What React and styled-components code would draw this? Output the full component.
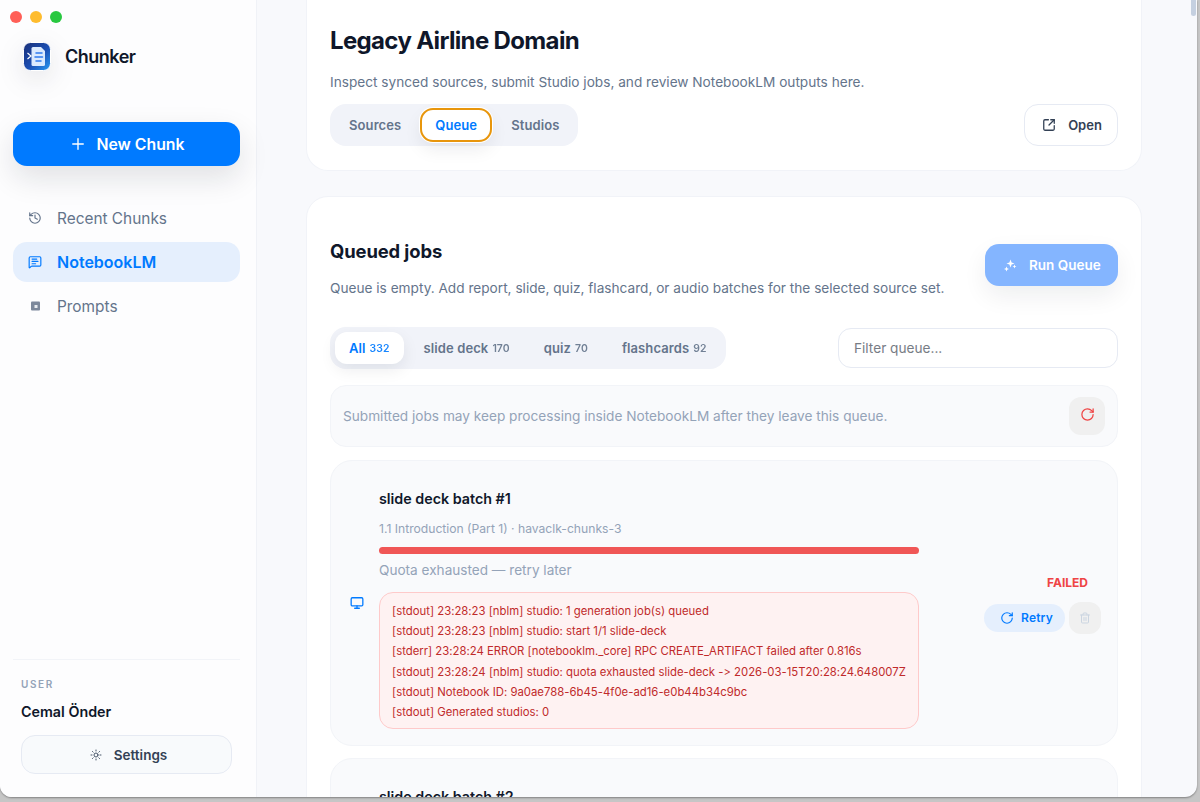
import styled, { createGlobalStyle } from "styled-components";
import {
  History,
  MessageSquareText,
  Plus,
  SquareArrowOutUpRight,
  Sun,
  Monitor,
  RotateCw,
  Trash2,
} from "lucide-react";

const GlobalStyle = createGlobalStyle`
  html, body {
    margin: 0;
    height: 100%;
    background: #c6c6c6;
    font-family: Inter, "Liberation Sans", sans-serif;
    overflow: hidden;
  }
  * { box-sizing: border-box; }
`;

const Desktop = styled.div`
  width: 1200px;
  height: 802px;
  overflow: hidden;
  background: #c6c6c6;
`;

const Window = styled.div`
  position: relative;
  width: 1197px;
  height: 797px;
  display: flex;
  overflow: hidden;
  border-radius: 0 0 12px 12px;
  background: #f8f9fc;
  box-shadow: 0 1px 2px rgba(0, 0, 0, 0.35);
`;

const ScrollThumb = styled.div`
  position: absolute;
  top: -4px;
  right: 1px;
  width: 5px;
  height: 20px;
  border-radius: 3px;
  background: #c5d0e0;
`;

const Sidebar = styled.aside`
  width: 257px;
  flex: none;
  display: flex;
  flex-direction: column;
  padding: 11px 16px 23px 13px;
  background: #fdfdfe;
  border-right: 1px solid #f0f2f7;
`;

const Traffic = styled.div`
  display: flex;
  gap: 8px;
  margin-left: -3px;
`;

const Light = styled.span`
  width: 12px;
  height: 12px;
  border-radius: 50%;
  background: ${(p) => p.$color};
`;

const Brand = styled.div`
  display: flex;
  align-items: center;
  gap: 14px;
  margin: 18px 0 0 10px;
  height: 30px;
  font-size: 18px;
  font-weight: 600;
  letter-spacing: -0.5px;
  color: #0f172a;
`;

const LogoMark = styled.svg`
  flex: none;
  filter: drop-shadow(0 8px 12px rgba(15, 23, 42, 0.1));
`;

const NewChunk = styled.div`
  height: 44px;
  margin-top: 51px;
  display: flex;
  align-items: center;
  justify-content: center;
  gap: 10px;
  border-radius: 14px;
  background: #007aff;
  color: #fff;
  font-size: 15.8px;
  font-weight: 600;
  box-shadow: 0 12px 30px rgba(15, 23, 42, 0.12);
`;

const Nav = styled.nav`
  display: flex;
  flex-direction: column;
  gap: 4px;
  margin-top: 32px;
`;

const NavItem = styled.div`
  height: 40px;
  display: flex;
  align-items: center;
  gap: 15px;
  padding-left: 15px;
  border-radius: 14px;
  font-size: ${(p) => (p.$active ? "16px" : "15.4px")};
  font-weight: ${(p) => (p.$active ? 600 : 400)};
  color: ${(p) => (p.$active ? "#007aff" : "#64748b")};
  background: ${(p) => (p.$active ? "#e5effd" : "transparent")};
`;

const SidebarFoot = styled.div`
  margin-top: auto;
  border-top: 1px solid #f2f4f8;
  padding: 18px 8px 0;
`;

const UserLabel = styled.div`
  font-size: 10px;
  font-weight: 600;
  letter-spacing: 1.6px;
  color: #94a3b8;
  line-height: 13px;
`;

const UserName = styled.div`
  margin-top: 12px;
  font-size: 14.3px;
  font-weight: 600;
  line-height: 18px;
  color: #0f172a;
`;

const SettingsBtn = styled.div`
  height: 39px;
  margin-top: 14px;
  display: flex;
  align-items: center;
  justify-content: center;
  gap: 12px;
  padding-left: 4px;
  border-radius: 14px;
  border: 1px solid #e6eaf3;
  background: #f8fafc;
  font-size: 13.5px;
  font-weight: 600;
  color: #334155;
`;

const Main = styled.main`
  flex: 1;
  min-width: 0;
  display: flex;
  flex-direction: column;
  gap: 25px;
  padding: 0 55px 0 49px;
  overflow: hidden;
`;

const Card = styled.section`
  flex: none;
  background: #fff;
  border: 1px solid #f1f3f8;
  border-radius: 22px;
  padding: ${(p) => p.$pad};
  ${(p) => p.$top && "border-top: none; border-radius: 0 0 22px 22px;"}
`;

const Title = styled.h1`
  margin: 0;
  font-size: 24px;
  line-height: 30px;
  font-weight: 700;
  letter-spacing: -0.65px;
  color: #0f172a;
`;

const Subtitle = styled.p`
  margin: 17px 0 0;
  font-size: 13.65px;
  line-height: 18px;
  color: #64748b;
`;

const HeadRow = styled.div`
  display: flex;
  align-items: center;
  justify-content: space-between;
  margin-top: 13px;
`;

const Segments = styled.div`
  display: inline-flex;
  align-items: center;
  gap: 6px;
  height: 42px;
  padding: 0 5px;
  border-radius: 16px;
  background: #f1f3f9;
`;

const Segment = styled.div`
  height: 32px;
  display: flex;
  align-items: center;
  gap: 4px;
  padding: 0 14px;
  border-radius: 12px;
  font-size: 13px;
  font-weight: 600;
  letter-spacing: 0.1px;
  white-space: nowrap;
  color: ${(p) => (p.$active ? "#007aff" : "#64748b")};
  background: ${(p) => (p.$active ? "#fff" : "transparent")};
  ${(p) => p.$active && "box-shadow: 0 6px 16px rgba(15, 23, 42, 0.08);"}
  ${(p) => p.$focus && "outline: 2px solid #e8960c; outline-offset: -1px; box-shadow: 0 0 0 2px #fff, 0 8px 18px rgba(15, 23, 42, 0.08);"}
`;

const Count = styled.span`
  font-size: 10.4px;
  font-weight: 600;
  opacity: 0.9;
`;

const OpenBtn = styled.div`
  width: 94px;
  height: 42px;
  display: flex;
  align-items: center;
  justify-content: center;
  gap: 12px;
  padding-left: 2px;
  border-radius: 14px;
  border: 1px solid #e6eaf3;
  background: #fff;
  font-size: 13px;
  font-weight: 600;
  color: #334155;
`;

const QueueHead = styled.div`
  display: flex;
  align-items: flex-start;
  justify-content: space-between;
`;

const QueueTitle = styled.h2`
  margin: 0;
  font-size: 18.4px;
  line-height: 24px;
  font-weight: 700;
  letter-spacing: -0.1px;
  color: #0f172a;
`;

const QueueText = styled.p`
  margin: 16px 0 0;
  font-size: 13.65px;
  line-height: 18px;
  color: #64748b;
`;

const RunBtn = styled.div`
  width: 133px;
  height: 42px;
  margin-top: 5px;
  display: flex;
  align-items: center;
  gap: 12px;
  padding-left: 18px;
  border-radius: 14px;
  background: #84b5ff;
  color: #fff;
  font-size: 13.5px;
  font-weight: 600;
  box-shadow: 0 10px 24px rgba(15, 23, 42, 0.07);
`;

const FilterRow = styled.div`
  display: flex;
  align-items: center;
  justify-content: space-between;
  margin-top: 30px;
`;

const FilterInput = styled.div`
  width: 280px;
  height: 40px;
  display: flex;
  align-items: center;
  padding-left: 15px;
  border-radius: 13px;
  border: 1px solid #e6eaf3;
  background: #fff;
  font-size: 13.65px;
  color: #777c85;
`;

const Notice = styled.div`
  height: 62px;
  margin-top: 16px;
  display: flex;
  align-items: center;
  justify-content: space-between;
  padding: 0 12px;
  border-radius: 16px;
  border: 1px solid #f2f4f8;
  background: #f9fafc;
  font-size: 13.65px;
  color: #94a3b8;
`;

const IconBtn = styled.div`
  width: ${(p) => p.$w}px;
  height: ${(p) => p.$h}px;
  display: flex;
  align-items: center;
  justify-content: center;
  border-radius: 12px;
  background: #f0f0f0;
`;

const RefreshGlyph = styled(RotateCw)`
  margin-top: -4px;
`;

const JobList = styled.div`
  display: flex;
  flex-direction: column;
  gap: 12px;
  margin-top: 13px;
`;

const Job = styled.article`
  display: grid;
  grid-template-columns: 14px 540px 1fr;
  column-gap: 18px;
  align-items: center;
  padding: 17px 16px 16px;
  border-radius: 22px;
  border: 1px solid #f2f4f8;
  background: #f9fafc;
`;

const JobIcon = styled(Monitor)`
  margin: -2px 0 0 3px;
`;

const JobBody = styled.div`
  min-width: 0;
  padding-top: 11px;
`;

const JobTitle = styled.div`
  font-size: 14.3px;
  line-height: 20px;
  font-weight: 600;
  color: #0f172a;
`;

const JobMeta = styled.div`
  margin-top: 12px;
  font-size: 12.15px;
  line-height: 16px;
  color: #94a3b8;
`;

const Progress = styled.div`
  height: 7px;
  margin-top: 10px;
  border-radius: 3.5px;
  background: #f05656;
`;

const JobStatus = styled.div`
  margin-top: 7px;
  font-size: 13.6px;
  line-height: 18px;
  color: #94a3b8;
`;

const Log = styled.div`
  margin-top: 13px;
  padding: 8px 12px 6px;
  border-radius: 14px;
  border: 1px solid #fecaca;
  background: #fef2f2;
  font-size: 11.35px;
  font-feature-settings: "calt" 0;
  line-height: 20.2px;
  white-space: nowrap;
  color: #c02a2a;
`;

const JobSide = styled.div`
  display: flex;
  flex-direction: column;
  align-items: flex-end;
  gap: 11px;
  margin-top: 1px;
`;

const Failed = styled.div`
  margin-right: 13px;
  font-size: 12px;
  line-height: 16px;
  font-weight: 700;
  color: #ef4444;
`;

const SideActions = styled.div`
  display: flex;
  align-items: center;
  gap: 4px;
`;

const RetryBtn = styled.div`
  width: 81px;
  height: 28px;
  display: flex;
  align-items: center;
  gap: 7px;
  padding-left: 16px;
  border-radius: 14px;
  background: #e5effd;
  color: #007aff;
  font-size: 12px;
  font-weight: 600;
  letter-spacing: 0.2px;
`;

const logLines = [
  "[stdout] 23:28:23 [nblm] studio: 1 generation job(s) queued",
  "[stdout] 23:28:23 [nblm] studio: start 1/1 slide-deck",
  "[stderr] 23:28:24 ERROR [notebooklm._core] RPC CREATE_ARTIFACT failed after 0.816s",
  "[stdout] 23:28:24 [nblm] studio: quota exhausted slide-deck -> 2026-03-15T20:28:24.648007Z",
  "[stdout] Notebook ID: 9a0ae788-6b45-4f0e-ad16-e0b44b34c9bc",
  "[stdout] Generated studios: 0",
];

const filters = [
  { label: "All", count: 332, active: true },
  { label: "slide deck", count: 170 },
  { label: "quiz", count: 70 },
  { label: "flashcards", count: 92 },
];

const ChunkerLogo = () => (
  <LogoMark width="28" height="29" viewBox="0 0 28 29">
    <defs>
      <linearGradient id="logo" x1="0" y1="0" x2="1" y2="1">
        <stop offset="0" stopColor="#1a2f77" />
        <stop offset="0.55" stopColor="#1b4fb4" />
        <stop offset="1" stopColor="#2a9cf5" />
      </linearGradient>
    </defs>
    <rect x="0.5" y="0.5" width="27" height="28" rx="7" fill="url(#logo)" stroke="#fff" />
    <path d="M10 5h8l4 4v13.5a1.5 1.5 0 0 1-1.5 1.5H10a1.5 1.5 0 0 1-1.5-1.5V6.500A1.5 1.5 0 0 1 10 5z" fill="#dbeafe" />
    <path d="M13 11h6M12 15h7.5M13 19h5" stroke="#2f7bf0" strokeWidth="1.5" strokeLinecap="round" />
    <path d="M4.5 11l3.5 3-3.5 3" fill="none" stroke="#fff" strokeWidth="1.2" />
  </LogoMark>
);

const PromptsIcon = () => (
  <svg width="14" height="14" viewBox="0 0 14 14">
    <rect x="3" y="2.5" width="9" height="9" rx="1" fill="#7c889b" />
    <rect x="6.5" y="6" width="3" height="3" fill="#e8ebf0" />
  </svg>
);

const SparkIcon = () => (
  <svg width="14" height="14" viewBox="0 0 14 14" fill="currentColor">
    <path d="M7.5 1.5l1.1 2.900 2.900 1.100-2.900 1.100-1.100 2.900-1.100-2.900-2.900-1.100 2.900-1.100z" />
    <path d="M3.5 8.5l.7 1.800 1.800.7-1.800.7-.7 1.800-.7-1.800-1.800-.7 1.800-.7z" />
    <path d="M11.5 6.5l.6 1.400 1.400.6-1.400.6-.6 1.400-.6-1.400-1.400-.6 1.400-.6z" />
  </svg>
);

const JobCard = ({ title }) => (
  <Job>
    <JobIcon size={14} strokeWidth={2.2} color="#007aff" />
    <JobBody>
      <JobTitle>{title}</JobTitle>
      <JobMeta>1.1 Introduction (Part 1) · havaclk-chunks-3</JobMeta>
      <Progress />
      <JobStatus>Quota exhausted — retry later</JobStatus>
      <Log>
        {logLines.map((line) => (
          <div key={line}>{line}</div>
        ))}
      </Log>
    </JobBody>
    <JobSide>
      <Failed>FAILED</Failed>
      <SideActions>
        <RetryBtn>
          <RotateCw size={14} strokeWidth={2} />
          Retry
        </RetryBtn>
        <IconBtn $w={32} $h={32}>
          <Trash2 size={12} strokeWidth={2} color="#cbd5e1" />
        </IconBtn>
      </SideActions>
    </JobSide>
  </Job>
);

const App = () => (
  <Desktop>
    <GlobalStyle />
    <Window>
      <Sidebar>
        <Traffic>
          <Light $color="#ff5f57" />
          <Light $color="#febc2e" />
          <Light $color="#28c840" />
        </Traffic>
        <Brand>
          <ChunkerLogo />
          Chunker
        </Brand>
        <NewChunk>
          <Plus size={18} strokeWidth={1.8} />
          New Chunk
        </NewChunk>
        <Nav>
          <NavItem>
            <History size={14} strokeWidth={2} />
            Recent Chunks
          </NavItem>
          <NavItem $active>
            <MessageSquareText size={14} strokeWidth={2} />
            NotebookLM
          </NavItem>
          <NavItem>
            <PromptsIcon />
            Prompts
          </NavItem>
        </Nav>
        <SidebarFoot>
          <UserLabel>USER</UserLabel>
          <UserName>Cemal Önder</UserName>
          <SettingsBtn>
            <Sun size={12} strokeWidth={2} color="#475569" />
            Settings
          </SettingsBtn>
        </SidebarFoot>
      </Sidebar>
      <Main>
        <Card $top $pad="26px 23px 24px 23px">
          <Title>Legacy Airline Domain</Title>
          <Subtitle>Inspect synced sources, submit Studio jobs, and review NotebookLM outputs here.</Subtitle>
          <HeadRow>
            <Segments>
              <Segment>Sources</Segment>
              <Segment $active $focus>Queue</Segment>
              <Segment>Studios</Segment>
            </Segments>
            <OpenBtn>
              <SquareArrowOutUpRight size={14} strokeWidth={2.2} />
              Open
            </OpenBtn>
          </HeadRow>
        </Card>
        <Card $pad="42px 23px 14px 23px">
          <QueueHead>
            <div>
              <QueueTitle>Queued jobs</QueueTitle>
              <QueueText>Queue is empty. Add report, slide, quiz, flashcard, or audio batches for the selected source set.</QueueText>
            </div>
            <RunBtn>
              <SparkIcon />
              Run Queue
            </RunBtn>
          </QueueHead>
          <FilterRow>
            <Segments>
              {filters.map((f) => (
                <Segment key={f.label} $active={f.active}>
                  {f.label} <Count>{f.count}</Count>
                </Segment>
              ))}
            </Segments>
            <FilterInput>Filter queue...</FilterInput>
          </FilterRow>
          <Notice>
            Submitted jobs may keep processing inside NotebookLM after they leave this queue.
            <IconBtn $w={36} $h={38}>
              <RefreshGlyph size={15} strokeWidth={2} color="#ef4444" />
            </IconBtn>
          </Notice>
          <JobList>
            <JobCard title="slide deck batch #1" />
            <JobCard title="slide deck batch #2" />
          </JobList>
        </Card>
      </Main>
      <ScrollThumb />
    </Window>
  </Desktop>
);

export default App;
